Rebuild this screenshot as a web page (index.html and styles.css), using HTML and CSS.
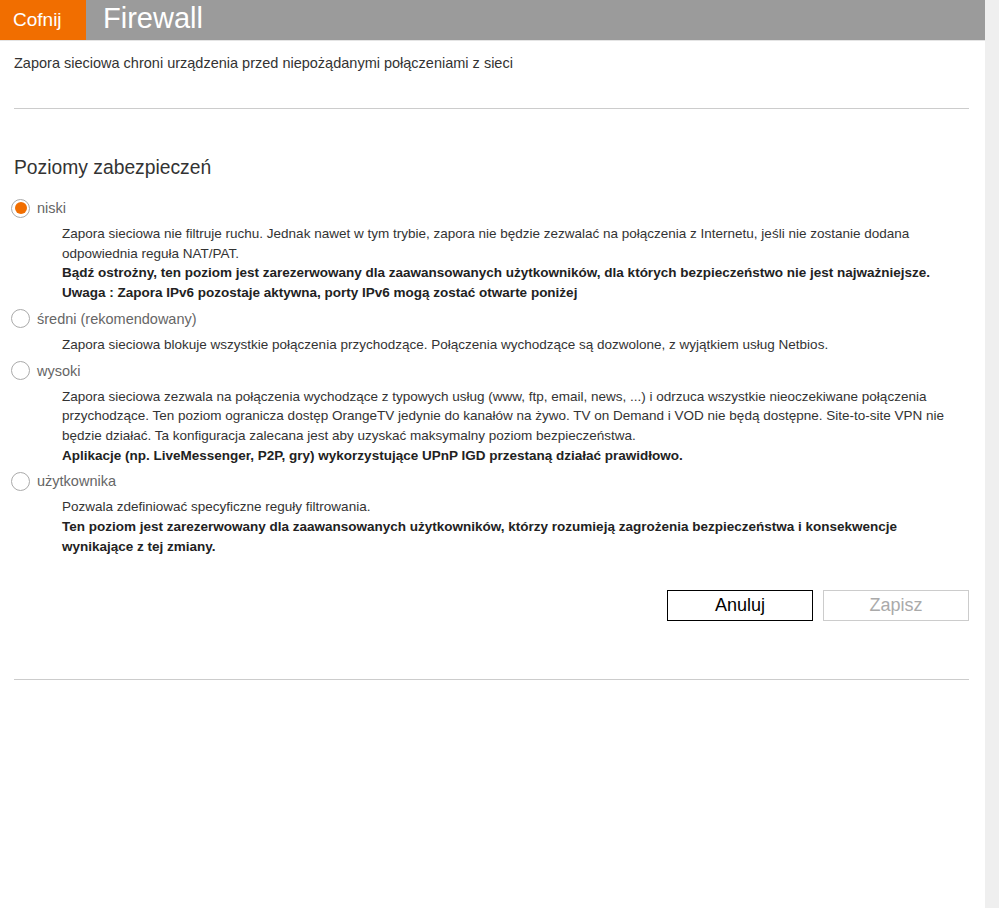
FILE: index.html
```html
<!DOCTYPE html>
<html lang="pl">
<head>
    <meta charset="UTF-8">
    <title>Firewall</title>
    <link rel="stylesheet" href="styles.css">
</head>
<body>
    <div class="page">
        <header class="topbar">
            <a class="back" href="#">Cofnij</a>
            <h1>Firewall</h1>
        </header>

        <div class="content">
            <p class="intro">Zapora sieciowa chroni urządzenia przed niepożądanymi połączeniami z sieci</p>
            <hr class="sep">

            <h2>Poziomy zabezpieczeń</h2>

            <form class="levels">
                <div class="level">
                    <label class="level-head">
                        <input type="radio" name="level" value="low" checked>
                        <span class="radio"></span>
                        niski
                    </label>
                    <div class="level-desc">
                        Zapora sieciowa nie filtruje ruchu. Jednak nawet w tym trybie, zapora nie będzie zezwalać na połączenia z Internetu, jeśli nie zostanie dodana odpowiednia reguła NAT/PAT.<br>
                        <b>Bądź ostrożny, ten poziom jest zarezerwowany dla zaawansowanych użytkowników, dla których bezpieczeństwo nie jest najważniejsze.</b><br>
                        <b>Uwaga : Zapora IPv6 pozostaje aktywna, porty IPv6 mogą zostać otwarte poniżej</b>
                    </div>
                </div>

                <div class="level">
                    <label class="level-head">
                        <input type="radio" name="level" value="medium">
                        <span class="radio"></span>
                        średni (rekomendowany)
                    </label>
                    <div class="level-desc">
                        Zapora sieciowa blokuje wszystkie połączenia przychodzące. Połączenia wychodzące są dozwolone, z wyjątkiem usług Netbios.
                    </div>
                </div>

                <div class="level">
                    <label class="level-head">
                        <input type="radio" name="level" value="high">
                        <span class="radio"></span>
                        wysoki
                    </label>
                    <div class="level-desc">
                        Zapora sieciowa zezwala na połączenia wychodzące z typowych usług (www, ftp, email, news, ...) i odrzuca wszystkie nieoczekiwane połączenia przychodzące. Ten poziom ogranicza dostęp OrangeTV jedynie do kanałów na żywo. TV on Demand i VOD nie będą dostępne. Site-to-site VPN nie będzie działać. Ta konfiguracja zalecana jest aby uzyskać maksymalny poziom bezpieczeństwa.<br>
                        <b>Aplikacje (np. LiveMessenger, P2P, gry) wykorzystujące UPnP IGD przestaną działać prawidłowo.</b>
                    </div>
                </div>

                <div class="level">
                    <label class="level-head">
                        <input type="radio" name="level" value="custom">
                        <span class="radio"></span>
                        użytkownika
                    </label>
                    <div class="level-desc">
                        Pozwala zdefiniować specyficzne reguły filtrowania.<br>
                        <b>Ten poziom jest zarezerwowany dla zaawansowanych użytkowników, którzy rozumieją zagrożenia bezpieczeństwa i konsekwencje wynikające z tej zmiany.</b>
                    </div>
                </div>

                <div class="actions">
                    <button type="reset" class="btn">Anuluj</button>
                    <button type="submit" class="btn btn-save" disabled>Zapisz</button>
                </div>
            </form>

            <hr class="sep sep-bottom">
        </div>
    </div>
</body>
</html>
```

FILE: styles.css
```css
* {
    box-sizing: border-box;
}

html, body {
    margin: 0;
    height: 100%;
}

body {
    font-family: 'Liberation Sans', Arial, sans-serif;
    background: #efefef;
    color: #333;
}

.page {
    width: 985px;
    min-height: 100%;
    background: #fff;
}

/* top bar */
.topbar {
    display: flex;
    align-items: center;
    height: 41px;
    background: #9b9b9b;
    border-bottom: 1px solid #e4e4e4;
}

.back {
    display: flex;
    align-items: center;
    width: 86px;
    height: 40px;
    padding-left: 13px;
    background: #f16e00;
    color: #fff;
    font-size: 19px;
    text-decoration: none;
}

.topbar h1 {
    margin: 0 0 4px 17px;
    font-size: 29px;
    font-weight: normal;
    color: #fff;
}

.content {
    padding: 12px 16px 0 14px;
}

.intro {
    margin: 0;
    font-size: 14.5px;
    line-height: 20px;
}

.sep {
    margin: 35px 0 0;
    border: 0;
    border-top: 1px solid #ccc;
}

h2 {
    margin: 47px 0 16px;
    font-size: 19.3px;
    line-height: 24px;
    font-weight: normal;
}

/* levels */
.level-head {
    display: flex;
    align-items: center;
    gap: 7px;
    height: 24px;
    margin-left: -3px;
    font-size: 14.5px;
    color: #666;
    cursor: pointer;
}

.level-head input {
    display: none;
}

.radio {
    width: 19px;
    height: 19px;
    border: 1px solid #aaa;
    border-radius: 50%;
    display: flex;
    align-items: center;
    justify-content: center;
    background: #fff;
}

.level-head input:checked + .radio::after {
    content: "";
    width: 12px;
    height: 12px;
    border-radius: 50%;
    background: #f16e00;
}

.level-desc {
    margin: 4px 0 4px 48px;
    font-size: 13.5px;
    line-height: 19.7px;
}

.level-desc b {
    color: #222;
}

.actions {
    display: flex;
    justify-content: flex-end;
    gap: 10px;
    margin-top: 34px;
}

.btn {
    width: 146px;
    height: 31px;
    background: #fff;
    border: 1px solid #000;
    font-family: inherit;
    font-size: 18px;
    color: #000;
    cursor: pointer;
}

.btn-save {
    border-color: #ccc;
    color: #aaa;
    cursor: default;
}

.sep-bottom {
    margin-top: 58px;
}
```
